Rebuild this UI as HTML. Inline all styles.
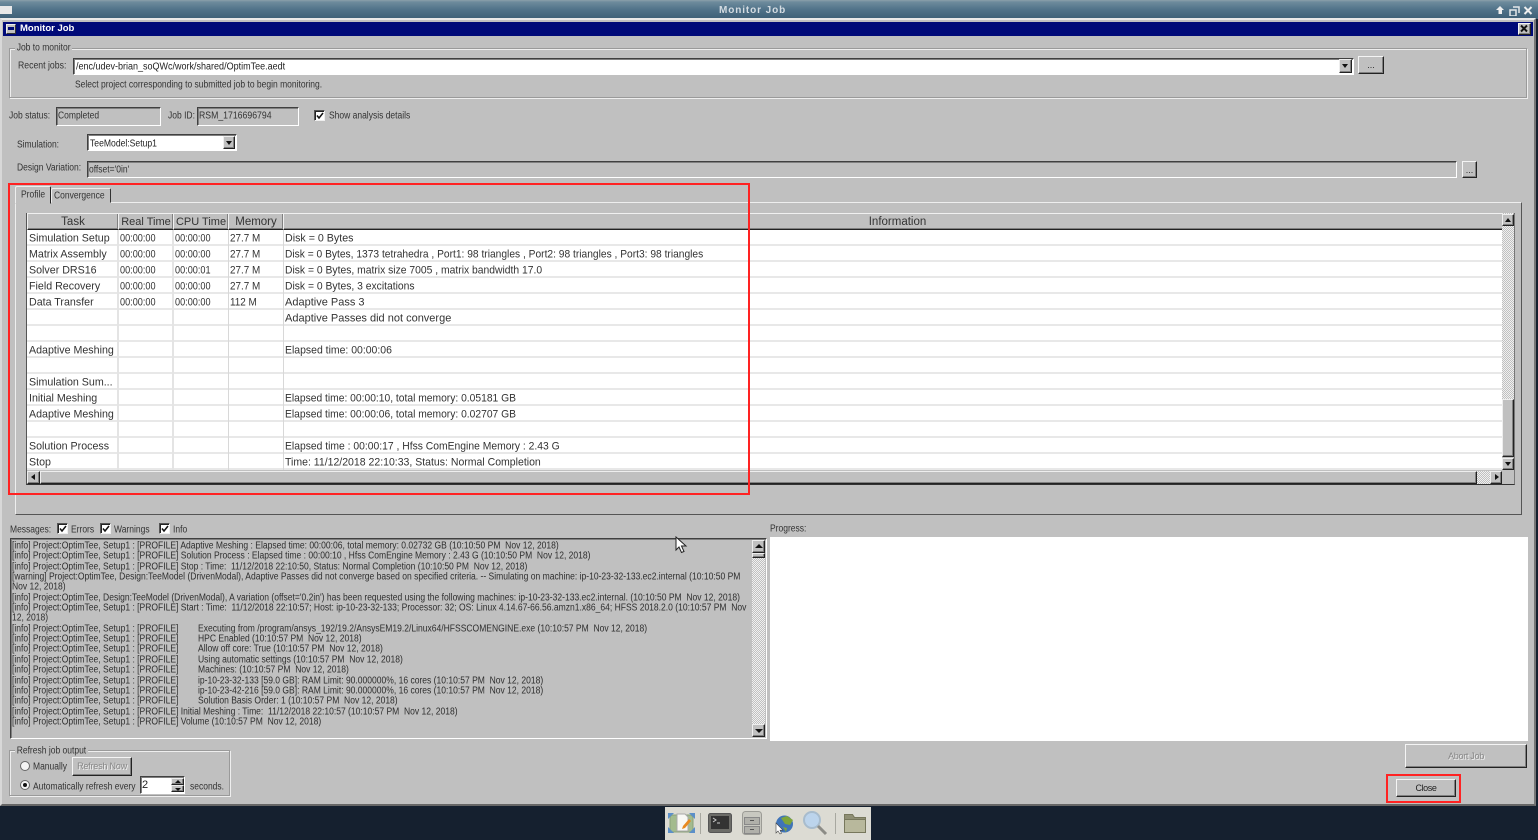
<!DOCTYPE html>
<html><head><meta charset="utf-8"><title>Monitor Job</title>
<style>
html,body{margin:0;padding:0;width:1538px;height:840px;overflow:hidden;background:#15202f}
*{box-sizing:border-box}
div,span{position:absolute}
body{font:10px "Liberation Sans",sans-serif;color:#2c2c2c}
.t{white-space:nowrap;line-height:12px;transform-origin:0 0;transform:translateY(2.5px) scaleX(var(--s,.85))}
.sunk{border:1px solid;border-color:#404040 #fff #fff #404040;box-shadow:inset 1px 1px 0 #808080}
.btn{background:#c0c0c0;border:1px solid;border-color:#f4f4f4 #222 #222 #f4f4f4;box-shadow:inset -1px -1px 0 #808080;text-align:center;font-size:9px;white-space:nowrap}
.etch{border:1px solid #9a9a9a;box-shadow:1px 1px 0 #eee,inset 1px 1px 0 #eee}
.cb{width:11px;height:11px;background:#fff;border:1px solid;border-color:#555 #eee #eee #555;box-shadow:inset 1px 1px 0 #222}
.cb svg{position:absolute;left:1px;top:1px}
.sb{background:#c0c0c0;border:1px solid;border-color:#eee #222 #222 #eee;box-shadow:inset -1px -1px 0 #808080}
.arr{width:0;height:0;border-style:solid;border-color:transparent}
.th{top:213px;height:17px;background:#c0c0c0;border:1px solid;border-color:#f0f0f0 #222 #222 #f0f0f0;box-shadow:inset -1px -1px 0 #808080;text-align:center;font-size:11.5px;line-height:16px;color:#333;white-space:nowrap}
.c{font-size:11px;line-height:16px;white-space:nowrap;color:#333;transform-origin:0 0;transform:translateY(.5px) scaleX(var(--s,.95))}
.a{left:29px;--s:.97}
.b{left:120px;--s:.83}
.d{left:175px;--s:.83}
.e{left:230px;--s:.9}
.f{left:285px}
.m{left:12px;font-size:9.75px;line-height:11px;white-space:pre;color:#2e2e2e;transform-origin:0 0;transform:translateY(.3px) scaleX(.875)}
.n{left:198px}
.red{border:2px solid #f22;}
.dith{background-color:#e0e0e0;background-image:repeating-conic-gradient(#c0c0c0 0 25%,#f0f0f0 0 50%);background-size:2px 2px}
</style></head><body>

<!-- window title bar -->
<div style="left:0;top:0;width:1538px;height:19px;background:linear-gradient(#8ba0aa 0,#6d8b9c 2px,#4f7188 10px,#3f6178 18px)"></div>
<div style="left:0;top:6px;width:12px;height:8px;background:#e8e8e8"></div>
<div style="left:719px;top:5px;font-size:10px;line-height:12px;white-space:nowrap;font-weight:bold;letter-spacing:.9px;color:#d4dce2">Monitor Job</div>
<svg style="position:absolute;left:1494px;top:4px" width="42" height="12"><path d="M6 2l4 4H8v4H4.500V6H2z" fill="#eee"/><path d="M16 6h6v6h-6zM19 3h6v6" fill="none" stroke="#e4e8ea" stroke-width="1.500"/><path d="M30.500 3l7 7M37.500 3l-7 7" stroke="#eee" stroke-width="2"/></svg>

<!-- dialog -->
<div style="left:0;top:18px;width:1536px;height:788px;background:#c0c0c0;border-top:2px solid #e8e8e8;border-left:2px solid #d8d8d8;border-right:2px solid #777;border-bottom:2px solid #666"></div>
<div style="left:3px;top:22px;width:1530px;height:14px;background:#000a78"></div>
<div style="left:6px;top:24px;width:10px;height:10px;background:#c0c0c0;border:1px solid #eee;border-right-color:#333;border-bottom-color:#333"><div style="left:1px;top:2px;width:6px;height:3px;background:#000a78"></div></div>
<div style="left:20px;top:23px;line-height:12px;white-space:nowrap;color:#fff;font-weight:bold;font-size:9.500px">Monitor Job</div>
<div class="btn" style="left:1518px;top:23px;width:13px;height:12px"><svg width="11" height="10" style="position:absolute;left:0;top:0"><path d="M2 1.500l6 6M8 1.500l-6 6" stroke="#111" stroke-width="2"/></svg></div>

<!-- Job to monitor -->
<div class="etch" style="left:9px;top:48px;width:1518px;height:50px"></div>
<div class="t" style="left:15px;top:40px;background:#c0c0c0;padding:0 2px;color:#333">Job to monitor</div>
<div class="t" style="left:18px;top:58px;color:#333;--s:.87">Recent jobs:</div>
<div class="sunk" style="left:73px;top:58px;width:1281px;height:17px;background:#fff"></div>
<div class="t" style="left:76px;top:59px;color:#222;--s:.9">/enc/udev-brian_soQWc/work/shared/OptimTee.aedt</div>
<div class="sb" style="left:1339px;top:59px;width:13px;height:14px"><div class="arr" style="left:2px;top:4px;border-width:4px 3.500px 0;border-top-color:#111"></div></div>
<div class="btn" style="left:1358px;top:56px;width:26px;height:18px;line-height:17px">...</div>
<div class="t" style="left:75px;top:77px;color:#333">Select project corresponding to submitted job to begin monitoring.</div>

<!-- status -->
<div class="t" style="left:9px;top:108px;color:#333">Job status:</div>
<div class="sunk" style="left:56px;top:107px;width:105px;height:19px"></div>
<div class="t" style="left:58px;top:108px;color:#333">Completed</div>
<div class="t" style="left:168px;top:108px;color:#333">Job ID:</div>
<div class="sunk" style="left:197px;top:107px;width:102px;height:19px"></div>
<div class="t" style="left:199px;top:108px;color:#333;--s:.87">RSM_1716696794</div>
<div class="cb" style="left:314px;top:110px"><svg width="8" height="8"><path d="M1 3.500l2 2.500 4-5" fill="none" stroke="#111" stroke-width="1.500"/></svg></div>
<div class="t" style="left:329px;top:108px;color:#333">Show analysis details</div>

<!-- simulation -->
<div class="t" style="left:17px;top:137px;color:#333">Simulation:</div>
<div class="sunk" style="left:87px;top:134px;width:150px;height:17px;background:#fff"></div>
<div class="t" style="left:90px;top:136px;color:#222;--s:.86">TeeModel:Setup1</div>
<div class="sb" style="left:223px;top:136px;width:12px;height:13px"><div class="arr" style="left:2px;top:4px;border-width:4px 3.500px 0;border-top-color:#111"></div></div>

<div class="t" style="left:17px;top:160px;color:#333">Design Variation:</div>
<div class="sunk" style="left:87px;top:161px;width:1370px;height:17px"></div>
<div class="t" style="left:89px;top:162px;color:#333">offset='0in'</div>
<div class="btn" style="left:1462px;top:161px;width:15px;height:17px;line-height:16px">...</div>

<!-- tab pane -->
<div style="left:15px;top:202px;width:1507px;height:313px;background:#c0c0c0;border:1px solid;border-color:#eee #555 #555 #eee"></div>
<div style="left:15px;top:186px;width:36px;height:18px;background:#c0c0c0;border:1px solid;border-color:#eee #222 #c0c0c0 #eee;border-radius:2px 2px 0 0"></div>
<div class="t" style="left:21px;top:187px;color:#333">Profile</div>
<div style="left:51px;top:188px;width:60px;height:15px;background:#c0c0c0;border:1px solid;border-color:#eee #333 #c0c0c0 #eee;border-radius:2px 2px 0 0"></div>
<div class="t" style="left:54px;top:188px;color:#333">Convergence</div>

<!-- table -->
<div style="left:26px;top:213px;width:1489px;height:272px;background:#c0c0c0;border:1px solid;border-color:#555 #777 #333 #555"></div>
<div style="left:27px;top:230px;width:1475px;height:240px;background:#fff repeating-linear-gradient(to bottom,#fff 0,#fff 14px,#e8e8e8 14px,#e8e8e8 16px)"></div>
<div style="left:117px;top:230px;width:2px;height:240px;background:#e4e4e4"></div>
<div style="left:172px;top:230px;width:2px;height:240px;background:#e4e4e4"></div>
<div style="left:228px;top:230px;width:1px;height:240px;background:#d8d8d8"></div>
<div style="left:283px;top:230px;width:1px;height:240px;background:#d8d8d8"></div>
<div class="th" style="left:27px;width:92px">Task</div>
<div class="th" style="left:118px;width:56px;font-size:11px">Real Time</div>
<div class="th" style="left:173px;width:56px;font-size:11px">CPU Time</div>
<div class="th" style="left:228px;width:56px">Memory</div>
<div class="th" style="left:283px;width:1229px">Information</div>

<div class="c a" style="top:230px">Simulation Setup</div><div class="c b" style="top:230px">00:00:00</div><div class="c d" style="top:230px">00:00:00</div><div class="c e" style="top:230px">27.7 M</div><div class="c f" style="top:230px;--s:.97">Disk = 0 Bytes</div>
<div class="c a" style="top:246px">Matrix Assembly</div><div class="c b" style="top:246px">00:00:00</div><div class="c d" style="top:246px">00:00:00</div><div class="c e" style="top:246px">27.7 M</div><div class="c f" style="top:246px;--s:.93">Disk = 0 Bytes, 1373 tetrahedra , Port1: 98 triangles , Port2: 98 triangles , Port3: 98 triangles</div>
<div class="c a" style="top:262px">Solver DRS16</div><div class="c b" style="top:262px">00:00:00</div><div class="c d" style="top:262px">00:00:01</div><div class="c e" style="top:262px">27.7 M</div><div class="c f" style="top:262px;--s:.94">Disk = 0 Bytes, matrix size 7005 , matrix bandwidth  17.0</div>
<div class="c a" style="top:278px">Field Recovery</div><div class="c b" style="top:278px">00:00:00</div><div class="c d" style="top:278px">00:00:00</div><div class="c e" style="top:278px">27.7 M</div><div class="c f" style="top:278px;--s:.94">Disk = 0 Bytes, 3 excitations</div>
<div class="c a" style="top:294px">Data Transfer</div><div class="c b" style="top:294px">00:00:00</div><div class="c d" style="top:294px">00:00:00</div><div class="c e" style="top:294px">112 M</div><div class="c f" style="top:294px;--s:1">Adaptive Pass 3</div>
<div class="c f" style="top:310px;--s:1">Adaptive Passes did not converge</div>
<div class="c a" style="top:342px">Adaptive Meshing</div><div class="c f" style="top:342px">Elapsed time: 00:00:06</div>
<div class="c a" style="top:374px">Simulation Sum...</div>
<div class="c a" style="top:390px">Initial Meshing</div><div class="c f" style="top:390px;--s:.935">Elapsed time: 00:00:10, total memory: 0.05181 GB</div>
<div class="c a" style="top:406px">Adaptive Meshing</div><div class="c f" style="top:406px;--s:.935">Elapsed time: 00:00:06, total memory: 0.02707 GB</div>
<div class="c a" style="top:438px">Solution Process</div><div class="c f" style="top:438px;--s:.94">Elapsed time : 00:00:17 , Hfss ComEngine Memory : 2.43 G</div>
<div class="c a" style="top:454px">Stop</div><div class="c f" style="top:454px;--s:.955">Time:  11/12/2018 22:10:33, Status: Normal Completion</div>

<!-- table vscroll -->
<div class="dith" style="left:1502px;top:213px;width:12px;height:186px"></div>
<div class="sb" style="left:1502px;top:399px;width:12px;height:58px"></div>
<div class="sb" style="left:1502px;top:214px;width:12px;height:12px"><div class="arr" style="left:2px;top:3px;border-width:0 3.500px 4px;border-bottom-color:#111"></div></div>
<div class="sb" style="left:1502px;top:458px;width:12px;height:12px"><div class="arr" style="left:2px;top:3px;border-width:4px 3.500px 0;border-top-color:#111"></div></div>
<!-- table hscroll -->
<div class="sb" style="left:27px;top:471px;width:13px;height:13px"><div class="arr" style="left:3px;top:2px;border-width:3.500px 4px 3.500px 0;border-right-color:#111"></div></div>
<div class="sb" style="left:40px;top:471px;width:1437px;height:13px"></div>
<div class="dith" style="left:1477px;top:471px;width:13px;height:13px"></div>
<div class="sb" style="left:1490px;top:471px;width:12px;height:13px"><div class="arr" style="left:4px;top:2px;border-width:3.500px 0 3.500px 4px;border-left-color:#111"></div></div>

<!-- messages -->
<div class="t" style="left:10px;top:522px;color:#333">Messages:</div>
<div class="cb" style="left:57px;top:523px"><svg width="8" height="8"><path d="M1 3.500l2 2.500 4-5" fill="none" stroke="#111" stroke-width="1.500"/></svg></div>
<div class="t" style="left:71px;top:522px;color:#333">Errors</div>
<div class="cb" style="left:100px;top:523px"><svg width="8" height="8"><path d="M1 3.500l2 2.500 4-5" fill="none" stroke="#111" stroke-width="1.500"/></svg></div>
<div class="t" style="left:114px;top:522px;color:#333">Warnings</div>
<div class="cb" style="left:159px;top:523px"><svg width="8" height="8"><path d="M1 3.500l2 2.500 4-5" fill="none" stroke="#111" stroke-width="1.500"/></svg></div>
<div class="t" style="left:173px;top:522px;color:#333">Info</div>
<div class="t" style="left:770px;top:521px;color:#333">Progress:</div>
<div class="sunk" style="left:10px;top:538px;width:757px;height:201px"></div>

<div class="m" style="top:540px">[info] Project:OptimTee, Setup1 : [PROFILE] Adaptive Meshing : Elapsed time: 00:00:06, total memory: 0.02732 GB (10:10:50 PM  Nov 12, 2018)</div>
<div class="m" style="top:550px">[info] Project:OptimTee, Setup1 : [PROFILE] Solution Process : Elapsed time : 00:00:10 , Hfss ComEngine Memory : 2.43 G (10:10:50 PM  Nov 12, 2018)</div>
<div class="m" style="top:561px">[info] Project:OptimTee, Setup1 : [PROFILE] Stop : Time:  11/12/2018 22:10:50, Status: Normal Completion (10:10:50 PM  Nov 12, 2018)</div>
<div class="m" style="top:571px">[warning] Project:OptimTee, Design:TeeModel (DrivenModal), Adaptive Passes did not converge based on specified criteria. -- Simulating on machine: ip-10-23-32-133.ec2.internal (10:10:50 PM</div>
<div class="m" style="top:581px">Nov 12, 2018)</div>
<div class="m" style="top:592px">[info] Project:OptimTee, Design:TeeModel (DrivenModal), A variation (offset='0.2in') has been requested using the following machines: ip-10-23-32-133.ec2.internal. (10:10:50 PM  Nov 12, 2018)</div>
<div class="m" style="top:602px">[info] Project:OptimTee, Setup1 : [PROFILE] Start : Time:  11/12/2018 22:10:57; Host: ip-10-23-32-133; Processor: 32; OS: Linux 4.14.67-66.56.amzn1.x86_64; HFSS 2018.2.0 (10:10:57 PM  Nov</div>
<div class="m" style="top:612px">12, 2018)</div>
<div class="m" style="top:623px">[info] Project:OptimTee, Setup1 : [PROFILE]</div><div class="m n" style="top:623px">Executing from /program/ansys_192/19.2/AnsysEM19.2/Linux64/HFSSCOMENGINE.exe (10:10:57 PM  Nov 12, 2018)</div>
<div class="m" style="top:633px">[info] Project:OptimTee, Setup1 : [PROFILE]</div><div class="m n" style="top:633px">HPC Enabled (10:10:57 PM  Nov 12, 2018)</div>
<div class="m" style="top:643px">[info] Project:OptimTee, Setup1 : [PROFILE]</div><div class="m n" style="top:643px">Allow off core: True (10:10:57 PM  Nov 12, 2018)</div>
<div class="m" style="top:654px">[info] Project:OptimTee, Setup1 : [PROFILE]</div><div class="m n" style="top:654px">Using automatic settings (10:10:57 PM  Nov 12, 2018)</div>
<div class="m" style="top:664px">[info] Project:OptimTee, Setup1 : [PROFILE]</div><div class="m n" style="top:664px">Machines: (10:10:57 PM  Nov 12, 2018)</div>
<div class="m" style="top:675px">[info] Project:OptimTee, Setup1 : [PROFILE]</div><div class="m n" style="top:675px">ip-10-23-32-133 [59.0 GB]: RAM Limit: 90.000000%, 16 cores (10:10:57 PM  Nov 12, 2018)</div>
<div class="m" style="top:685px">[info] Project:OptimTee, Setup1 : [PROFILE]</div><div class="m n" style="top:685px">ip-10-23-42-216 [59.0 GB]: RAM Limit: 90.000000%, 16 cores (10:10:57 PM  Nov 12, 2018)</div>
<div class="m" style="top:695px">[info] Project:OptimTee, Setup1 : [PROFILE]</div><div class="m n" style="top:695px">Solution Basis Order: 1 (10:10:57 PM  Nov 12, 2018)</div>
<div class="m" style="top:706px">[info] Project:OptimTee, Setup1 : [PROFILE] Initial Meshing : Time:  11/12/2018 22:10:57 (10:10:57 PM  Nov 12, 2018)</div>
<div class="m" style="top:716px">[info] Project:OptimTee, Setup1 : [PROFILE] Volume (10:10:57 PM  Nov 12, 2018)</div>

<div class="dith" style="left:752px;top:540px;width:13px;height:197px"></div>
<div class="sb" style="left:752px;top:540px;width:13px;height:13px"><div class="arr" style="left:2px;top:3px;border-width:0 4px 4px;border-bottom-color:#111"></div></div>
<div class="sb" style="left:752px;top:553px;width:13px;height:5px"></div>
<div class="sb" style="left:752px;top:724px;width:13px;height:13px"><div class="arr" style="left:2px;top:4px;border-width:4px 4px 0;border-top-color:#111"></div></div>

<div style="left:770px;top:537px;width:758px;height:204px;background:#fff"></div>

<svg style="position:absolute;left:675px;top:536px" width="13" height="18"><path d="M1 1v13l3-3 2.500 5.500 2.500-1L6.500 10H11z" fill="#fff" stroke="#222" stroke-width="1"/></svg>

<!-- refresh -->
<div class="etch" style="left:9px;top:750px;width:221px;height:46px"></div>
<div class="t" style="left:15px;top:743px;background:#c0c0c0;padding:0 2px;color:#333">Refresh job output</div>
<svg style="position:absolute;left:20px;top:761px" width="10" height="10"><circle cx="5" cy="5" r="4.500" fill="#f4f4f4" stroke="#666"/></svg>
<div class="t" style="left:33px;top:759px;color:#333">Manually</div>
<div class="btn" style="left:72px;top:757px;width:60px;height:19px;line-height:17px;color:#888;text-shadow:1px 1px 0 #eee;letter-spacing:-.2px">Refresh Now</div>
<svg style="position:absolute;left:20px;top:780px" width="10" height="10"><circle cx="5" cy="5" r="4.500" fill="#f4f4f4" stroke="#666"/><circle cx="5" cy="5" r="2" fill="#111"/></svg>
<div class="t" style="left:33px;top:779px;color:#333">Automatically refresh every</div>
<div class="sunk" style="left:140px;top:776px;width:45px;height:18px;background:#fff"></div>
<div style="left:142px;top:779px;font-size:11px;line-height:12px;color:#222">2</div>
<div class="sb" style="left:171px;top:778px;width:13px;height:7px"><div class="arr" style="left:3px;top:1px;border-width:0 3px 3px;border-bottom-color:#111"></div></div>
<div class="sb" style="left:171px;top:785px;width:13px;height:7px"><div class="arr" style="left:3px;top:2px;border-width:3px 3px 0;border-top-color:#111"></div></div>
<div class="t" style="left:190px;top:779px;color:#333">seconds.</div>

<!-- buttons -->
<div class="btn" style="left:1405px;top:744px;width:122px;height:24px;line-height:23px;color:#888;text-shadow:1px 1px 0 #eee;letter-spacing:-.3px">Abort Job</div>
<div class="btn" style="left:1396px;top:779px;width:60px;height:18px;line-height:17px;color:#222;letter-spacing:-.4px">Close</div>

<!-- red highlights -->
<div class="red" style="left:8px;top:183px;width:742px;height:312px"></div>
<div class="red" style="left:1386px;top:774px;width:75px;height:29px"></div>

<!-- dock -->
<div style="left:665px;top:807px;width:206px;height:33px;background:#dcdbd3"></div>
<svg style="position:absolute;left:665px;top:807px" width="206" height="33">
 <rect x="5" y="8" width="23" height="17" rx="3" fill="#a3bb8e" stroke="#8aa27a"/>
 <path d="M3 6h6l-6 6zM30 6h-6l6 6zM3 26h6l-6-6zM30 26h-6l6-6z" fill="#5b8fc8"/>
 <path d="M12 7h8l3 3v14H12z" fill="#f8f8f4" stroke="#aaa"/>
 <path d="M18 19l6-7 2 2-6 7-3 1z" fill="#e88a20"/>
 <rect x="35" y="6" width="1" height="21" fill="#a8a8a0"/>
 <rect x="43.500" y="6.500" width="23" height="19" rx="2" fill="#6c6c68" stroke="#555"/>
 <rect x="46" y="9" width="18" height="13" fill="#333"/>
 <path d="M48 11l3 2-3 2M52 16h3" stroke="#ccc" fill="none"/>
 <rect x="77.500" y="4.500" width="19" height="23" rx="3" fill="#c8c8c0" stroke="#9c9c96"/>
 <rect x="79.500" y="10.500" width="15" height="7" fill="#b0b0aa" stroke="#888"/>
 <rect x="79.500" y="19.500" width="15" height="7" fill="#b0b0aa" stroke="#888"/>
 <path d="M85 13.500h4M85 22.500h4" stroke="#555"/>
 <circle cx="119.500" cy="17" r="8.500" fill="#3f74b8"/>
 <path d="M116 11l6-2 6 4-3 5-5-1-2-3zM118 20l4 1-1 4z" fill="#7ea53a"/>
 <path d="M111 16v10l2-2 2 3 1.500-.8-1.500-3h3z" fill="#fff" stroke="#444" stroke-width=".6"/>
 <circle cx="147" cy="13" r="8" fill="#bcd4ec" stroke="#a8bccd" stroke-width="2"/>
 <path d="M153 19l8 8" stroke="#8c8c86" stroke-width="3"/>
 <rect x="170" y="6" width="1" height="21" fill="#a8a8a0"/>
 <path d="M179.500 7.500h8l2 3h11v15h-21z" fill="#8f8f74" stroke="#77775c"/>
 <path d="M179.500 12.500h21v13h-21z" fill="#b8b89c" stroke="#77775c"/>
</svg>
</body></html>
